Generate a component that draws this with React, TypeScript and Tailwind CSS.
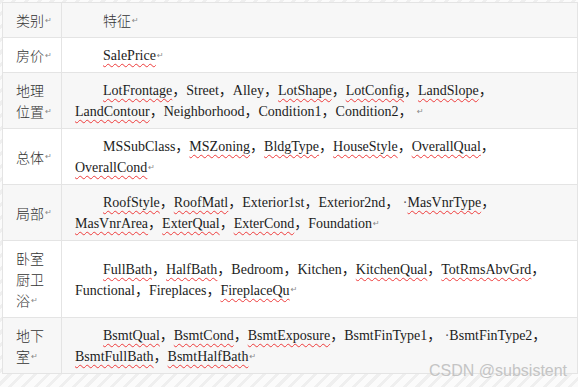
import React from "react";

type Tok = { t: string; u?: boolean; dot?: boolean };

const W = (t: string): Tok => ({ t, u: true });
const P = (t: string): Tok => ({ t });

const rows: { label: string[]; lines: Tok[][]; gray: boolean }[] = [
  { label: ["类别"], lines: [[P("特征")]], gray: true },
  { label: ["房价"], lines: [[W("SalePrice")]], gray: false },
  {
    label: ["地理", "位置"],
    gray: true,
    lines: [
      [W("LotFrontage"), P("，Street，Alley，"), W("LotShape"), P("，"), W("LotConfig"), P("，"), W("LandSlope"), P("，")],
      [W("LandContour"), P("，Neighborhood，Condition1，Condition2，\u00a0")],
    ],
  },
  {
    label: ["总体"],
    gray: false,
    lines: [
      [P("MSSubClass，"), W("MSZoning"), P("，"), W("BldgType"), P("，"), W("HouseStyle"), P("，"), W("OverallQual"), P("，")],
      [W("OverallCond")],
    ],
  },
  {
    label: ["局部"],
    gray: true,
    lines: [
      [W("RoofStyle"), P("，"), W("RoofMatl"), P("，Exterior1st，Exterior2nd，"), { t: "\u00a0·", dot: true }, W("MasVnrType"), P("，")],
      [W("MasVnrArea"), P("，"), W("ExterQual"), P("，"), W("ExterCond"), P("，Foundation")],
    ],
  },
  {
    label: ["卧室", "厨卫", "浴"],
    gray: false,
    lines: [
      [W("FullBath"), P("，"), W("HalfBath"), P("，Bedroom，Kitchen，"), W("KitchenQual"), P("，"), W("TotRmsAbvGrd"), P("，")],
      [P("Functional，Fireplaces，"), W("FireplaceQu")],
    ],
  },
  {
    label: ["地下", "室"],
    gray: true,
    lines: [
      [W("BsmtQual"), P("，"), W("BsmtCond"), P("，"), W("BsmtExposure"), P("，BsmtFinType1，"), { t: "\u00a0·", dot: true }, P("BsmtFinType2，")],
      [W("BsmtFullBath"), P("，"), W("BsmtHalfBath")],
    ],
  },
];

function Mark() {
  return (
    <span className="text-[8px] leading-[8px] text-[#888] ml-[1px]" style={{ fontFamily: "'DejaVu Sans', sans-serif" }}>
      ↵
    </span>
  );
}

const cjk = { fontFamily: "'Noto Sans CJK SC', sans-serif", fontWeight: 300 };

export default function App() {
  return (
    <div className="relative w-[578px] h-[387px] overflow-hidden bg-[repeating-linear-gradient(135deg,#efefef_0px,#efefef_3px,#fbfbfb_3px,#fbfbfb_9px)] pt-[2px] pl-[2px]">
      <div
        className="w-[576px] border border-[#e4e4e4] text-[14px] leading-[21px] text-[#1c1c1c]"
        style={{ fontFamily: "'Liberation Serif', 'Noto Sans CJK SC', serif" }}
      >
        {rows.map((r, i) => (
          <div
            key={i}
            className={`grid grid-cols-[59px_1fr] ${i > 0 ? "border-t border-[#e4e4e4]" : ""} ${r.gray ? "bg-[#f7f7f7]" : "bg-white"}`}
          >
            <div className="border-r border-[#e4e4e4] pl-[13px] pt-[7px] pb-[6px] flex flex-col justify-center text-[#333]" style={cjk}>
              {r.label.map((l, j) => (
                <div key={j} className="h-[21px] whitespace-nowrap flex items-center">
                  {l}
                  {j === r.label.length - 1 && <Mark />}
                </div>
              ))}
            </div>
            <div className="pl-[13px] pt-[7px] pb-[6px] flex flex-col justify-center">
              {r.lines.map((line, j) => (
                <div key={j} className={`h-[21px] whitespace-nowrap flex items-center ${j === 0 ? "pl-[28px]" : ""}`}>
                  <span>
                    {line.map((tk, k) =>
                      tk.dot ? (
                        <span key={k} className="text-[#555]">{tk.t}</span>
                      ) : tk.u ? (
                        <span key={k} className="underline decoration-wavy decoration-[#ee3b3b] decoration-1 underline-offset-[3px]">
                          {tk.t}
                        </span>
                      ) : (
                        <span key={k} className={i === 0 ? "text-[#333]" : ""} style={i === 0 ? cjk : undefined}>{tk.t}</span>
                      )
                    )}
                  </span>
                  {j === r.lines.length - 1 && <Mark />}
                </div>
              ))}
            </div>
          </div>
        ))}
      </div>
      <div
        className="absolute left-[429px] top-[361px] text-[16px] leading-[20px] text-[#c4c4c4] whitespace-nowrap"
        style={{ fontFamily: "'Liberation Sans', sans-serif" }}
      >
        CSDN @subsistent
      </div>
    </div>
  );
}
